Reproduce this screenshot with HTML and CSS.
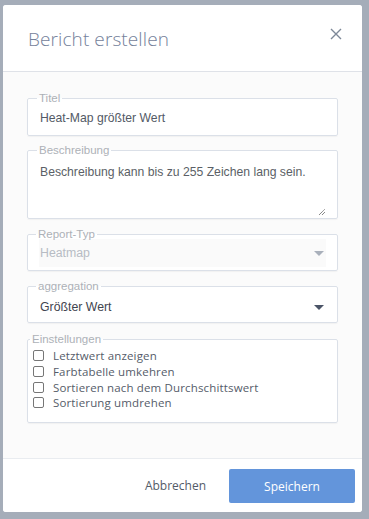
FILE: index.html
```html
<!DOCTYPE html>
<html lang="de">
<head>
<meta charset="utf-8">
<link rel="stylesheet" href="styles.css">
</head>
<body>
<div class="modal">
  <div class="modal-header">
    <h1 class="modal-title">Bericht erstellen</h1>
    <button class="close" aria-label="Schließen">
      <svg width="12" height="12" viewBox="0 0 12 12"><path d="M1 1L11 11M11 1L1 11" stroke="#7d8898" stroke-width="1.4" fill="none"/></svg>
    </button>
  </div>
  <div class="modal-body">
    <fieldset class="field f-titel">
      <legend>Titel</legend>
      <div class="value">Heat-Map größter Wert</div>
    </fieldset>
    <fieldset class="field f-desc">
      <legend>Beschreibung</legend>
      <div class="desc-inner">
        <div class="value">Beschreibung kann bis zu 255 Zeichen lang sein.</div>
        <svg class="grip" width="8" height="8" viewBox="0 0 8 8"><path d="M1 7L7 1M4 7L7 4" stroke="#444" stroke-width="0.9" stroke-dasharray="1 0.6"/></svg>
      </div>
    </fieldset>
    <fieldset class="field f-select disabled">
      <legend>Report-Typ</legend>
      <div class="select-box"><span>Heatmap</span><span class="caret"></span></div>
    </fieldset>
    <fieldset class="field f-select f-agg">
      <legend>aggregation</legend>
      <div class="select-box"><span>Größter Wert</span><span class="caret"></span></div>
    </fieldset>
    <fieldset class="field f-checks">
      <legend>Einstellungen</legend>
      <div class="checks">
        <label class="check"><span class="box"></span>Letztwert anzeigen</label>
        <label class="check"><span class="box"></span>Farbtabelle umkehren</label>
        <label class="check"><span class="box"></span>Sortieren nach dem Durchschittswert</label>
        <label class="check"><span class="box"></span>Sortierung umdrehen</label>
      </div>
    </fieldset>
  </div>
  <div class="modal-footer">
    <button class="btn btn-link">Abbrechen</button>
    <button class="btn btn-primary">Speichern</button>
  </div>
</div>
</body>
</html>
```
FILE: styles.css
```css
* { box-sizing: border-box; }
html, body { margin: 0; padding: 0; }
body {
  background: #a5adb9;
  width: 369px;
  height: 519px;
  padding: 5px 7px 7px 3px;
  font-family: "Open Sans", "Noto Sans", sans-serif;
}
.modal {
  background: #fbfbfb;
  border-radius: 3px;
  height: 507px;
  display: flex;
  flex-direction: column;
  overflow: hidden;
}
.modal-header {
  background: #fff;
  height: 67px;
  border-bottom: 1px solid #dfe2e8;
  display: flex;
  align-items: flex-start;
  justify-content: space-between;
  padding: 21px 19px 0 25px;
}
.modal-title {
  margin: 0;
  font-weight: 300;
  font-size: 19px;
  color: #74819a;
  letter-spacing: 0.1px;
}
.close {
  border: 0;
  background: none;
  padding: 0;
  margin-top: 1px;
  width: 14px;
  height: 14px;
  display: flex;
  align-items: center;
  justify-content: center;
}
.modal-body {
  flex: 1;
  padding: 20px 24px 0 24px;
  display: flex;
  flex-direction: column;
}
.field {
  margin: 0 0 9px 0;
  border: 1px solid #dbe0e8;
  border-radius: 2px;
  background: #fff;
  padding: 0 12px;
  box-shadow: 0 1px 1px rgba(0,0,0,0.04);
}
.field legend {
  font-family: "Liberation Sans", Arial, sans-serif;
  font-size: 11.5px;
  color: #adb1b7;
  padding: 0 2px;
  margin-left: -3px;
  line-height: 12px;
}
.value {
  font-family: "Liberation Sans", Arial, sans-serif;
  font-size: 12.2px;
  color: #535a66;
}
.f-titel { height: 44px; margin-bottom: 8px; }
.f-titel .value { padding-top: 7px; }
.f-desc { height: 75px; padding-right: 11px; }
.desc-inner {
  height: 62px;
  display: flex;
  flex-direction: column;
  justify-content: space-between;
}
.f-desc .value { padding-top: 9px; color: #5b5f66; }
.grip { align-self: flex-end; margin-bottom: 2px; }
.f-select { height: 43px; padding: 0 11px 0 11px; }
.f-agg { margin-bottom: 10px; }
.f-agg .select-box { margin-top: 3px; }
.select-box {
  display: flex;
  justify-content: space-between;
  align-items: center;
  font-family: "Liberation Sans", Arial, sans-serif;
  font-size: 12.3px;
  color: #3f4550;
  height: 24px;
  padding: 0 2px 0 1px;
  margin-top: 2px;
}
.caret {
  width: 0; height: 0;
  border-left: 5px solid transparent;
  border-right: 5px solid transparent;
  border-top: 5px solid #4b5467;
}
.disabled .select-box {
  background: #fafafa;
  color: #b7bcc4;
  height: 28px;
  margin-top: -1px;
}
.disabled .caret { border-top-color: #a9b0bb; }
.f-checks { height: 90px; padding: 0 5px; }
.checks { padding-top: 3px; }
.check {
  display: flex;
  align-items: center;
  font-size: 11.5px;
  color: #555c69;
  height: 15.7px;
  letter-spacing: 0.15px;
}
.box {
  width: 11px; height: 11px;
  border: 1px solid #767676;
  border-radius: 2px;
  margin-right: 9px;
  background: #fff;
  flex: none;
}
.modal-footer {
  background: #fff;
  height: 54px;
  border-top: 1px solid #e9ecf0;
  display: flex;
  justify-content: flex-end;
  align-items: center;
  padding: 0 7px 0 0;
}
.btn {
  font-family: "Open Sans", "Noto Sans", sans-serif;
  font-size: 12px;
  border: 0;
  cursor: pointer;
}
.btn-link {
  background: none;
  color: #535b68;
  margin-right: 23px;
  padding: 0;
}
.btn-primary {
  background: #6395db;
  color: #fff;
  width: 126px;
  height: 34px;
  border-radius: 2px;
  margin-top: 1px;
}
```
